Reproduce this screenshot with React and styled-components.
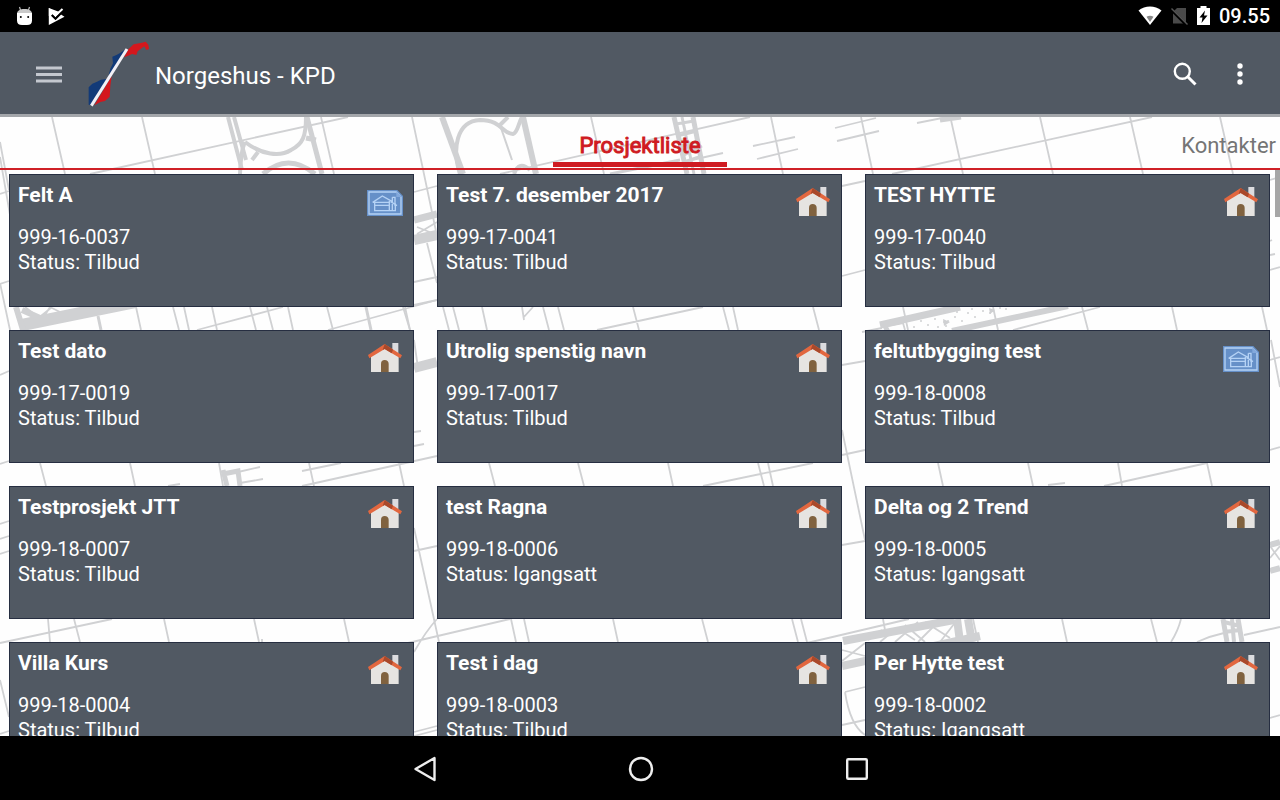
import React from "react";
import styled, { createGlobalStyle } from "styled-components";

const GlobalStyle = createGlobalStyle`
  * { box-sizing: border-box; }
  body {
    margin: 0;
    background: #000;
    font-family: Roboto, "Liberation Sans", sans-serif;
  }
  button {
    font: inherit;
    color: inherit;
    background: none;
    border: 0;
    padding: 0;
    cursor: pointer;
  }
  svg { display: block; }
`;

const Screen = styled.div`
  height: 100vh;
  display: flex;
  flex-direction: column;
  overflow: hidden;
`;

const StatusBar = styled.div`
  flex: none;
  height: 32px;
  padding: 0 10px 0 16px;
  display: flex;
  align-items: center;
  justify-content: space-between;
  background: #000;
  color: #fff;
`;

const StatusGroup = styled.div`
  display: flex;
  align-items: center;
  gap: ${(p) => p.$gap}px;
`;

const Clock = styled.time`
  font-size: 20px;
  line-height: 24px;
  font-weight: 500;
`;

const AppBar = styled.header`
  flex: none;
  height: 85px;
  padding: 2px 36px 0 36px;
  display: flex;
  align-items: center;
  background: #515963;
  border-bottom: 3px solid #a3a6aa;
  color: #fff;
`;

const AppTitle = styled.h1`
  flex: 1;
  margin: 0 0 0 5px;
  padding-top: 4px;
  font-size: 24px;
  line-height: 32px;
  font-weight: 400;
`;

const LogoBox = styled.div`
  margin-left: 26px;
`;

const Actions = styled.div`
  display: flex;
  align-items: center;
  gap: 39px;
`;

const IconButton = styled.button`
  display: flex;
  align-items: center;
  justify-content: center;
  min-height: 48px;
`;

const Content = styled.main`
  position: relative;
  flex: 1;
  min-height: 0;
  display: flex;
  flex-direction: column;
  overflow: hidden;
  background: #fefefe;
`;

const Backdrop = styled.svg`
  position: absolute;
  inset: 0;
  width: 100%;
  height: 100%;
`;

const Tabs = styled.nav`
  position: relative;
  flex: none;
  height: 53px;
  display: grid;
  grid-template-columns: 1fr auto 1fr;
  border-bottom: 2px solid #cf2027;
`;

const Tab = styled.button`
  grid-column: ${(p) => (p.$active ? 2 : 3)};
  justify-self: ${(p) => (p.$active ? "center" : "end")};
  height: 50px;
  padding: ${(p) => (p.$active ? "12px 26px 0" : "12px 4px 5px")};
  font-size: 22px;
  line-height: 32px;
  color: ${(p) => (p.$active ? "#cf1b22" : "#757575")};
  border-bottom: ${(p) => (p.$active ? "5px solid #cf1b22" : "0")};
  -webkit-text-stroke: ${(p) => (p.$active ? "1px #cf1b22" : "0")};
`;

const Grid = styled.ul`
  position: relative;
  flex: 1;
  min-height: 0;
  margin: 0;
  padding: 4px 10px 0 9px;
  list-style: none;
  overflow: hidden;
  display: grid;
  grid-template-columns: repeat(3, 1fr);
  grid-auto-rows: 133px;
  gap: 23px;
`;

const Card = styled.a`
  height: 100%;
  padding: 8px 10px 0 8px;
  display: flex;
  justify-content: space-between;
  background: #515963;
  border: 1px solid #262e41;
  color: #fff;
  text-decoration: none;
`;

const CardTitle = styled.h2`
  margin: 0 0 18px;
  font-size: 21px;
  line-height: 24px;
  font-weight: 700;
`;

const CardLine = styled.p`
  margin: 0;
  font-size: 20px;
  line-height: 25px;
`;

const CardIcon = styled.div`
  width: 36px;
  height: 33px;
  display: flex;
  align-items: flex-end;
  justify-content: center;
`;

const ScrollThumb = styled.div`
  position: absolute;
  top: 53px;
  right: 0;
  width: 5px;
  height: 47px;
  background: #a6a6a6;
`;

const NavBar = styled.nav`
  flex: none;
  height: 64px;
  padding: 2px 0 0 1px;
  display: flex;
  justify-content: center;
  background: #000;
`;

const NavButton = styled.button`
  width: 216px;
  display: flex;
  align-items: center;
  justify-content: center;
`;

const thinLines = [
  // tab strip
  "M0 142L9 190M52 117L65 174M142 117L155 174M90 174L348 117M321 117L334 174M412 117L437 236M500 174L750 117",
  "M591 117L604 174M771 117L783 174M753 146L795 137M757 159L798 149M683 162L723 153M835 128L876 118M837 141L879 131",
  "M861 117L873 174M951 120L963 174M1040 117L1053 174M1130 117L1143 174M1220 117L1233 174M892 174L1152 117M917 123L947 117",
  // beside the first row of cards
  "M0 157L10 215M0 194L9 191M0 284L9 281M0 283L10 330M414 192L437 186M427 243L437 283M414 282L437 277M414 305L437 300M417 227L437 235M417 234L437 222",
  "M842 186L865 181M842 276L865 270M1270 180L1280 177M1270 270L1280 267M1270 241L1272 240M1270 255L1275 254",
  // below the first row
  "M136 307L141 330M173 307L179 330M184 307L189 330M212 307L217 330M250 307L256 330M267 307L273 330M288 307L293 330M327 307L333 330M403 307L410 330",
  "M197 330L283 307M328 330L437 300M25 307L42 320L50 307M30 325L52 307M50 307L66 315",
  "M405 307L410 330M443 307L449 330M453 307L459 330M482 307L487 330M523 318L533 307M522 307L524 320M543 307L549 330M558 307L564 330M633 307L639 330M723 307L729 330M733 307L738 330M813 307L819 330M597 330L703 307",
  "M903 307L908 330M993 307L998 330M1082 307L1088 330M1172 307L1177 330M1262 307L1267 330M1013 330L1100 307M862 332L882 328M888 326L903 323L905 330",
  // second row
  "M0 375L9 371M0 464L9 461M414 340L418 368M414 432L421 431M414 446L424 444M40 463L46 486M130 463L135 486M219 463L223 486M309 463L314 486M399 463L404 486",
  "M238 472L260 467M240 483L263 479M302 471L341 463M302 486L437 456M168 486L180 484M489 463L495 486M578 463L584 486",
  "M842 365L865 361M842 455L865 450M842 430L865 540M668 463L673 486M758 463L764 486M768 463L773 486M703 486L813 463M938 463L943 486M1028 463L1033 486M1118 463L1122 486M1207 463L1212 486",
  "M1104 486L1207 463M1048 485L1065 483M1270 360L1280 357M1270 450L1280 447M1271 340L1280 387",
  // third row
  "M0 524L9 521M0 539L9 536M0 554L9 551M414 528L439 642M414 551L437 546M48 619L50 642M74 619L80 642M164 619L169 642M254 619L259 642M344 619L349 642M262 639V642",
  "M0 643L112 619M408 643L510 619M437 619Q426 631 414 652M511 619L516 642M524 619L529 642M613 619L618 642M0 680L9 717M0 734L9 731M414 732L437 726M414 736L437 730",
  "M842 545L865 541M702 619L708 642M792 619L798 642M801 619L807 642M883 619L885 630M807 643L909 619M973 619L978 642M1062 619L1067 642M1151 619L1157 642M1181 619Q1178 631 1171 642M1197 642Q1210 636 1224 633M1244 635L1280 627",
  "M842 650L865 656M842 661L865 643M868 640L882 630M880 642L897 628L915 640M895 642L918 622M905 625L925 642M918 642L940 620M925 622L950 638M940 642L954 624",
  "M845 692L865 687M845 692Q850 725 865 735M842 725L865 720M1270 718L1280 715M1270 558L1280 546M1270 546L1280 560",
];

const heavyLines = [
  ["M228 117L242 170M234 117L246 160", 4],
  ["M245 142C262 155 280 157 291 150C303 144 306 136 306 117M245 142Q241 150 240 174", 4],
  ["M258 152L252 160", 4],
  ["M307 117L322 174M263 174Q288 152 315 174M306 138L316 140", 5],
  ["M442 117L463 174", 6],
  ["M460 174C452 150 456 121 480 120C502 120 502 134 513 134C518 132 518 124 522 117M500 125L508 117M514 174Q519 160 530 170", 4],
  ["M500 125L512 160", 2],
  ["M523 117L536 174", 6],
  ["M674 117L687 174M693 117L704 174", 5],
  ["M682 117L694 174M676 124L694 121M677 136L697 131M680 146L700 141M683 138L698 150M682 156L702 146M684 162L702 156M610 174L680 160", 3],
  ["M940 120L961 117", 5],
  ["M414 220L437 214", 7],
  ["M414 240L437 235", 10],
  ["M22 325L135 302", 12],
  ["M16 307L23 330M22 310L40 318", 6],
  ["M98 316L101 330M366 307L371 330", 3],
  ["M880 325L960 307", 7],
  ["M883 322L888 332", 5],
  ["M952 331L1068 306", 6],
  ["M414 368L437 362", 10],
  ["M223 474L238 471L240 486M223 470L227 486", 5],
  ["M843 641L954 620", 8],
  ["M842 666L980 636", 8],
  ["M957 619L960 642M968 619L972 642", 8],
  ["M1223 619L1227 642M1238 619L1242 642", 5],
  ["M1224 622L1240 626M1224 632L1240 630M1232 619L1234 642", 4],
  ["M1270 545L1280 542M1270 571L1280 568", 6],
];

const speckles = [
  [914, 327], [921, 321], [928, 325], [935, 319], [944, 322], [948, 321], [955, 317], [962, 321],
  [968, 313], [975, 317], [983, 311], [990, 313], [992, 311], [1000, 308], [1006, 309], [938, 327],
  [925, 317], [972, 309], [957, 312], [946, 326],
];

function FloorPlan() {
  return (
    <Backdrop viewBox="0 117 1280 619" preserveAspectRatio="xMidYMin slice" aria-hidden="true">
      <g fill="none" stroke="#d0d1d3">
        {thinLines.map((d) => (
          <path key={d} d={d} strokeWidth="1.8" />
        ))}
        {heavyLines.map(([d, w]) => (
          <path key={d} d={d} strokeWidth={w} />
        ))}
      </g>
      <g fill="#cfd0d2">
        {speckles.map(([x, y]) => (
          <circle key={`${x}-${y}`} cx={x} cy={y} r="1" />
        ))}
        <path d="M943 319l7 3-6 4zM989 308l6 2-5 4z" />
      </g>
    </Backdrop>
  );
}

const AndroidIcon = () => (
  <svg width="17" height="20" viewBox="0 0 17 20" aria-hidden="true">
    <path d="M3.500 1l1.300 4M13.500 1l-1.300 4" stroke="#bbb" strokeWidth="1.200" />
    <path d="M1 8C1 4.500 4 3 8.500 3S16 4.500 16 8z" fill="#c9c9c9" />
    <path d="M1 7h15v7.500Q16 19 11 19H6Q1 19 1 14.500z" fill="#fff" />
    <circle cx="4.800" cy="11" r="1" />
    <circle cx="12.200" cy="11" r="1" />
  </svg>
);

const PlayCheckIcon = () => (
  <svg width="17" height="19" viewBox="0 0 17 19" aria-hidden="true">
    <path d="M.8 1v17L16.500 9.800 13 7.500 7.500 13 3 8.500 5 6.500 7.500 9 11.500 5z" fill="#fff" />
    <path d="M.8 1L11 6.500 7.500 10.500 4.500 7.500 3 9 .8 9z" fill="#fff" />
    <path d="M3.800 8l3.700 3.700L13.500 5.500" fill="none" stroke="#000" strokeWidth="1.800" />
    <path d="M8.500 7.500L14.500 2" fill="none" stroke="#fff" strokeWidth="2" />
  </svg>
);

const WifiIcon = () => (
  <svg width="24" height="20" viewBox="0 0 24 20" aria-hidden="true">
    <path d="M.5 4.500C7-1 17-1 23.500 4.500L12 19z" fill="#fff" />
    <path d="M8.500 10.800Q12 8.800 15.500 10.800L12 16z" fill="#888" />
  </svg>
);

const NoSimIcon = () => (
  <svg width="17" height="19" viewBox="0 0 17 19" aria-hidden="true">
    <path d="M6 1h9v15.500H2V5z" fill="#4a4a4a" />
    <path d="M0 2.500L15.500 18" stroke="#000" strokeWidth="3" />
    <path d="M.5 1.500L16.500 17.500" stroke="#555" strokeWidth="1.500" />
  </svg>
);

const BatteryIcon = () => (
  <svg width="13" height="20" viewBox="0 0 13 20" aria-hidden="true">
    <path d="M3.500 0h6v2H13v17H0V2h3.500z" fill="#fff" />
    <path d="M8 4.500L2.500 11.500h3L4.500 17l6-7.500H7z" fill="#000" />
  </svg>
);

const MenuIcon = () => (
  <svg width="26" height="17" viewBox="0 0 26 17" aria-hidden="true">
    <path d="M0 2h26M0 8.500h26M0 15h26" stroke="#c4c8cf" strokeWidth="2.800" />
  </svg>
);

const Logo = () => (
  <svg width="62" height="66" viewBox="263 123 186 198" aria-hidden="true">
    <path d="M265 314L265 262 276 251 290 245 302 239 322 236 330 206 338 190 336 170 350 164 358 160 372 150 378 152 275 316z" fill="#123a78" />
    <path d="M282 316L334 228 330 258 328 290 314 303 300 306z" fill="#d4171d" />
    <path d="M371 172L384 148 400 133 425 128 436 125 444 134 446 147 438 150 432 139 421 147 412 154 408 165 395 162 384 167z" fill="#d4171d" />
    <path d="M273 317L380 147" stroke="#f3f1f6" strokeWidth="9" />
  </svg>
);

const SearchIcon = () => (
  <svg width="24" height="24" viewBox="0 0 24 24" fill="none" stroke="#fff" aria-hidden="true">
    <circle cx="9.300" cy="9.300" r="7.500" strokeWidth="2.400" />
    <path d="M14.500 14.500L22.500 22.500" strokeWidth="3" />
  </svg>
);

const MoreIcon = () => (
  <svg width="8" height="22" viewBox="0 0 8 22" fill="#fff" aria-hidden="true">
    <circle cx="4" cy="3" r="2.700" />
    <circle cx="4" cy="11" r="2.700" />
    <circle cx="4" cy="19" r="2.700" />
  </svg>
);

const HouseIcon = () => (
  <svg width="34" height="29" viewBox="0 0 102 87" role="img" aria-label="Hus">
    <path d="M73 0h18v42H73z" fill="#dcdcdf" />
    <path d="M9 38L49 12l43 26v49H9z" fill="#e6e4e1" />
    <path d="M0 36L50 3l52 34-5 9-47-28L4 46z" fill="#e2673f" />
    <path d="M50 3l25 17-4 11-21-13-6 3z" fill="#a9492b" />
    <path d="M39 87V62q0-11 11-11t12 11v25z" fill="#80623f" />
  </svg>
);

const PlanIcon = () => (
  <svg width="36" height="26" viewBox="0 0 108 78" fill="none" role="img" aria-label="Felt">
    <path d="M0 0h91l17 18v60H0z" fill="#6690c8" />
    <path d="M6 6h82l14 15v51H6z" stroke="#b5d2f5" strokeWidth="4" />
    <path d="M88 4v17h16z" fill="#83a9dc" />
    <path d="M17 37L46 18l30 17M17 37h50M23 37v25h62V42M23 46h44M67 33v29M76 22h8v26M76 22v38M70 34l20 13" stroke="#b5d2f5" strokeWidth="4" />
  </svg>
);

const projects = [
  ["Felt A", "999-16-0037", "Tilbud", "plan"],
  ["Test 7. desember 2017", "999-17-0041", "Tilbud"],
  ["TEST HYTTE", "999-17-0040", "Tilbud"],
  ["Test dato", "999-17-0019", "Tilbud"],
  ["Utrolig spenstig navn", "999-17-0017", "Tilbud"],
  ["feltutbygging test", "999-18-0008", "Tilbud", "plan"],
  ["Testprosjekt JTT", "999-18-0007", "Tilbud"],
  ["test Ragna", "999-18-0006", "Igangsatt"],
  ["Delta og 2 Trend", "999-18-0005", "Igangsatt"],
  ["Villa Kurs", "999-18-0004", "Tilbud"],
  ["Test i dag", "999-18-0003", "Tilbud"],
  ["Per Hytte test", "999-18-0002", "Igangsatt"],
];

export default function App() {
  return (
    <Screen>
      <GlobalStyle />
      <StatusBar>
        <StatusGroup $gap={15}>
          <AndroidIcon />
          <PlayCheckIcon />
        </StatusGroup>
        <StatusGroup $gap={9}>
          <WifiIcon />
          <NoSimIcon />
          <BatteryIcon />
          <Clock>09.55</Clock>
        </StatusGroup>
      </StatusBar>
      <AppBar>
        <IconButton aria-label="Meny">
          <MenuIcon />
        </IconButton>
        <LogoBox>
          <Logo />
        </LogoBox>
        <AppTitle>Norgeshus - KPD</AppTitle>
        <Actions>
          <IconButton aria-label="Søk">
            <SearchIcon />
          </IconButton>
          <IconButton aria-label="Flere valg">
            <MoreIcon />
          </IconButton>
        </Actions>
      </AppBar>
      <Content>
        <FloorPlan />
        <Tabs>
          <Tab $active aria-current="page">Prosjektliste</Tab>
          <Tab>Kontakter</Tab>
        </Tabs>
        <Grid>
          {projects.map(([name, number, status, kind]) => (
            <li key={number}>
              <Card href={`#${number}`}>
                <div>
                  <CardTitle>{name}</CardTitle>
                  <CardLine>{number}</CardLine>
                  <CardLine>Status: {status}</CardLine>
                </div>
                <CardIcon>{kind === "plan" ? <PlanIcon /> : <HouseIcon />}</CardIcon>
              </Card>
            </li>
          ))}
        </Grid>
        <ScrollThumb />
      </Content>
      <NavBar>
        <NavButton aria-label="Tilbake">
          <svg width="24" height="26" viewBox="0 0 24 26" fill="none" aria-hidden="true">
            <path d="M21.500 2v22L2.500 13z" stroke="#eee" strokeWidth="2.400" strokeLinejoin="round" />
          </svg>
        </NavButton>
        <NavButton aria-label="Hjem">
          <svg width="26" height="26" viewBox="0 0 26 26" fill="none" aria-hidden="true">
            <circle cx="13" cy="13" r="11" stroke="#eee" strokeWidth="2.400" />
          </svg>
        </NavButton>
        <NavButton aria-label="Oversikt">
          <svg width="22" height="22" viewBox="0 0 22 22" fill="none" aria-hidden="true">
            <rect x="1.200" y="1.200" width="19.600" height="19.600" rx="1" stroke="#eee" strokeWidth="2.400" />
          </svg>
        </NavButton>
      </NavBar>
    </Screen>
  );
}
